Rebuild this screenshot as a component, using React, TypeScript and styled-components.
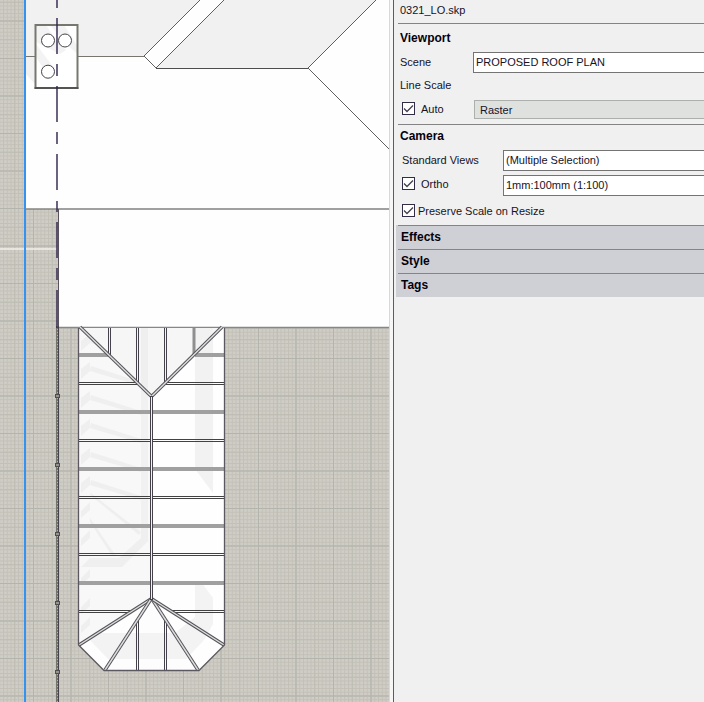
import React from 'react';
import styled, { createGlobalStyle } from 'styled-components';

const Global = createGlobalStyle`
  * { box-sizing: border-box; }
  body { margin: 0; font: 11px/14px "Liberation Sans", Arial, sans-serif; color: #17121f; background: #f0f0f0; }
`;

const Workspace = styled.div`
  display: grid;
  grid-template-columns: minmax(0, 389fr) 5px minmax(0, 310fr);
  min-height: 100vh;
`;

const Canvas = styled.main`
  height: 100vh;
  overflow: hidden;
  svg { display: block; width: 100%; height: 100%; }
`;

const Splitter = styled.div`
  background: #f6f6f6;
  border-left: 1px solid #d8d8d8;
  border-right: 1px solid #5c5c5c;
`;

const Inspector = styled.aside`
  overflow: hidden;
  padding-left: 2px;
`;

const FileName = styled.div`
  height: 23px;
  padding: 3px 4px;
`;

const Section = styled.section`
  margin-left: 2px;
  border-top: 1px solid #848484;
`;

const Heading = styled.h2<{ $compact?: boolean }>`
  margin: 0;
  padding: ${p => (p.$compact ? 4 : 7)}px 2px 5px;
  font-size: 12px;
  line-height: 14px;
  color: #05010c;
`;

const Row = styled.div<{ $height: number; $indent?: number }>`
  display: flex;
  align-items: center;
  height: ${p => p.$height}px;
  padding-left: ${p => p.$indent ?? 4}px;
`;

const Label = styled.label<{ $width?: number; $raised?: boolean }>`
  display: flex;
  align-items: center;
  flex: none;
  white-space: nowrap;
  width: ${p => (p.$width ? p.$width + 'px' : 'auto')};
  padding-bottom: ${p => (p.$raised ? 4 : 2)}px;
`;

const Check = styled.input<{ $tight?: boolean }>`
  appearance: none;
  flex: none;
  width: 13px;
  height: 13px;
  margin: 0 ${p => (p.$tight ? 3 : 6)}px 0 0;
  border: 1px solid #332c47;
  background: #fff;
  &:checked {
    background: #fff url("data:image/svg+xml,%3Csvg xmlns='http://www.w3.org/2000/svg' viewBox='0 0 11 11'%3E%3Cpath d='M1 5.5 4 8.5 10 2.5' fill='none' stroke='%23443f50' stroke-width='1.3'/%3E%3C/svg%3E");
  }
`;

const Select = styled.select<{ $muted?: boolean }>`
  appearance: none;
  flex: 1;
  min-width: 0;
  height: ${p => (p.$muted ? 19 : 21)}px;
  padding: 0 ${p => (p.$muted ? 5 : 2)}px ${p => (p.$muted ? 0 : 2)}px;
  border: 1px solid ${p => (p.$muted ? '#acb0ac' : '#747474')};
  border-right: 0;
  border-radius: 0;
  background: ${p => (p.$muted ? '#dfe1df' : '#fff')};
  color: inherit;
  font: inherit;
`;

const Accordion = styled.nav`
  padding-left: 2px;
  background: #cfd0d6;
`;

const Tab = styled.button`
  display: block;
  width: 100%;
  height: 24px;
  padding: 0 3px 2px;
  border: 0;
  border-top: 1px solid #848484;
  background: transparent;
  font: bold 12px/14px "Liberation Sans", Arial, sans-serif;
  text-align: left;
  color: #05010c;
`;

const wideRibs = [355, 412, 469, 526, 583];
const thinRibs = [383, 440, 497, 554, 611];
const posts = [396, 465, 534, 603, 672];
const slats = [335, 363, 392, 420, 449, 477];
const lowerSlats = [502, 530, 569, 598, 617];
const hips = [
  [80, 327, 151, 396],
  [222, 327, 152, 396],
  [151, 599, 79, 645],
  [151, 599, 105, 670],
  [152, 599, 198, 670],
  [152, 599, 224, 645],
];

const ribSpan = (y: number): [number, number] => {
  if (y === 355) return [109, 195];
  if (y === 383) return [138, 166];
  if (y === 611) return [132, 171];
  return [150, 153];
};

const RoofPlan = () => (
  <svg viewBox="0 0 389 702" preserveAspectRatio="xMinYMin slice" role="img" aria-label="Proposed roof plan">
    <defs>
      <pattern id="minor" width="3.75" height="3.75" patternUnits="userSpaceOnUse" x="33" y="58">
        <path d="M.5 0V3.75M0 .5H3.75" stroke="#c2c0b7" />
      </pattern>
      <pattern id="middle" width="18.75" height="18.75" patternUnits="userSpaceOnUse" x="33" y="58">
        <path d="M.5 0V18.75M0 .5H18.75" stroke="#bebdb4" />
      </pattern>
      <pattern id="major" width="37.5" height="37.5" patternUnits="userSpaceOnUse" x="33" y="58">
        <path d="M.5 0V37.5M0 .5H37.5" stroke="#b4b4ad" />
      </pattern>
      <clipPath id="leftSlope">
        <path d="M79 328 151 396V599L79 645Z" />
      </clipPath>
    </defs>

    <rect width="389" height="702" fill="#cfcdc5" />
    <rect width="389" height="702" fill="url(#minor)" />
    <rect width="389" height="702" fill="url(#middle)" />
    <rect width="389" height="702" fill="url(#major)" />
    <path d="M0 249H57" stroke="#f5efe9" strokeWidth="1.5" />

    <path d="M25 0H389V328H58V209H25Z" fill="#fefefe" />
    <path d="M25 0H200L144 56H35V84L25 73ZM224 0H376L308 68H156Z" fill="#f1f1f1" />
    <g fill="none" stroke="#4e4e4e">
      <path d="M25 56.5H144" stroke="#77776f" />
      <path d="M200 0 144 56 156 68 224 0M376 0 308 68 389 149" strokeWidth=".9" />
      <path d="M156 68.5H308" />
    </g>
    <path d="M58 209H389" stroke="#a0a0a0" strokeWidth="2" />
    <path d="M25 209H58" stroke="#85857f" strokeWidth="1.5" />
    <path d="M58.5 209V328" stroke="#57525e" />
    <path d="M58 327.5H389" stroke="#87878a" strokeWidth="1.5" />

    <rect x="35" y="24.5" width="43" height="63" fill="#fff" />
    <path d="M36 25H46L57 42 66 50 60 54 36 42ZM50 25H64L78 47V54L68 46Z" fill="#f3f3f3" />
    <path d="M36 44 54 68 50 79 36 57Z" fill="#f3f3f3" />
    <rect x="35.5" y="25" width="42" height="63" fill="none" stroke="#77776f" strokeWidth="2" />
    <path d="M34.5 88H78.500" stroke="#484848" strokeWidth="1.5" />
    <g fill="#fff" stroke="#44444a">
      <circle cx="48" cy="40.5" r="6.5" />
      <circle cx="65" cy="40.5" r="6.5" />
      <circle cx="48" cy="71.7" r="6.5" />
    </g>

    <path d="M79 328H225V645L199 671H104L79 645Z" fill="#fefefe" />
    <path d="M79 328 151 396V599L79 645Z" fill="#f8f8f8" />
    <path d="M81 328H222L151 396Z" fill="#f6f6f6" />
    <path d="M141 328H148V394L141 387Z" fill="#efefef" />
    <path d="M141 387 148 394V541L141 547Z" fill="#f1f1f1" />
    <path d="M195 328H213V493L195 469Z" fill="#f2f2f2" />
    <path d="M195 582H201L213 598V624L204 640 186 659H108L90 640 98 633H175L195 617Z" fill="#f3f3f3" />
    <path d="M151 601 106 669H197Z" fill="#fdfdfd" />
    <path d="M126 633H176L187 654V659H112V655Z" fill="#f3f3f3" />
    <g clipPath="url(#leftSlope)" fill="#efefef">
      {slats.map(y => (
        <path
          key={y}
          d={`M81 ${y + 6}L90 ${y - 1}V${y + 8}L81 ${y + 16}ZM91 ${y + 3}L141 ${y + 19}V${y + 23}L90 ${y + 8}Z`}
        />
      ))}
      {lowerSlats.map(y => (
        <path key={y} d={`M81 ${y + 9} 90 ${y}V${y + 8}L81 ${y + 16}Z`} />
      ))}
      <path d="M148 525V541L122 567H81L90 558H119L141 538V525Z" />
      <path d="M91 493 141 532 139 535 90 495ZM90 518 116 556H112L90 522Z" />
    </g>

    {wideRibs.map(y => {
      const [left, right] = ribSpan(y);
      return <path key={y} d={`M79 ${y}H${left}M${right} ${y}H225`} stroke="#a0a0a0" strokeWidth="4" />;
    })}
    {thinRibs.map(y => {
      const [left, right] = ribSpan(y);
      return (
        <path
          key={y}
          d={`M79 ${y - 0.5}H${left}M${right} ${y - 0.5}H225M79 ${y + 1.5}H${left}M${right} ${y + 1.5}H225`}
          stroke="#424242"
        />
      );
    })}
    <g stroke="#45424b">
      <path d="M108.5 328V354M110.5 328V356M136.5 328V382M138.5 328V384M164.5 328V384M166.5 328V382" />
      <path d="M136.5 623V671M138.5 620V671M164.5 620V671M166.5 623V671" />
    </g>
    <path d="M194 328V355" stroke="#8f8f8f" strokeWidth="3" />
    {hips.map(([x1, y1, x2, y2]) => (
      <g key={`${x1}-${x2}`}>
        <path d={`M${x1} ${y1}L${x2} ${y2}`} stroke="#56545a" strokeWidth="3.4" />
        <path d={`M${x1} ${y1}L${x2} ${y2}`} stroke="#dedede" strokeWidth="1.4" />
      </g>
    ))}
    <path d="M151.5 396V600" stroke="#45424b" strokeWidth="3" />
    <path d="M151.5 397V599" stroke="#f2f2f2" />
    <path d="M78.5 328V645L104 670.5H199L224.5 645V328" fill="none" stroke="#5b5860" strokeWidth="1.3" />

    <path d="M57.5 326V702" stroke="#76736f" strokeWidth="3" />
    <path d="M58.5 326V702" stroke="#45434a" />
    <path d="M57.5 326V702" stroke="#b5b2ad" strokeDasharray="1 2" />
    {posts.map(y => (
      <rect key={y} x="55.5" y={y - 1.5} width="4" height="3" fill="#96938f" stroke="#4f4d50" />
    ))}
    <path
      d="M57 0V8M57 18V54M57 64V76M57 86V122M57 132V144M57 154V190M57 201V212M57 222V258M57 268V280M57 290V328"
      stroke="#30214a"
      strokeWidth="1.4"
    />
    <path d="M25 0V702" stroke="#3592f1" strokeWidth="2" />
  </svg>
);

export default function App() {
  return (
    <>
      <Global />
      <Workspace>
        <Canvas>
          <RoofPlan />
        </Canvas>
        <Splitter />
        <Inspector>
          <FileName>0321_LO.skp</FileName>
          <Section>
            <Heading>Viewport</Heading>
            <Row $height={25} $indent={2}>
              <Label $width={73} htmlFor="scene">Scene</Label>
              <Select id="scene">
                <option>PROPOSED ROOF PLAN</option>
              </Select>
            </Row>
            <Row $height={20} $indent={2}>Line Scale</Row>
            <Row $height={29}>
              <Label $width={72}>
                <Check type="checkbox" defaultChecked />
                Auto
              </Label>
              <Select $muted aria-label="Render mode">
                <option>Raster</option>
              </Select>
            </Row>
          </Section>
          <Section>
            <Heading $compact>Camera</Heading>
            <Row $height={25}>
              <Label $width={101} htmlFor="views">Standard Views</Label>
              <Select id="views">
                <option>(Multiple Selection)</option>
              </Select>
            </Row>
            <Row $height={25}>
              <Label $width={101} $raised>
                <Check type="checkbox" defaultChecked />
                Ortho
              </Label>
              <Select aria-label="Drawing scale">
                <option>1mm:100mm (1:100)</option>
              </Select>
            </Row>
            <Row $height={27}>
              <Label>
                <Check type="checkbox" defaultChecked $tight />
                Preserve Scale on Resize
              </Label>
            </Row>
          </Section>
          <Accordion>
            <Tab>Effects</Tab>
            <Tab>Style</Tab>
            <Tab>Tags</Tab>
          </Accordion>
        </Inspector>
      </Workspace>
    </>
  );
}
